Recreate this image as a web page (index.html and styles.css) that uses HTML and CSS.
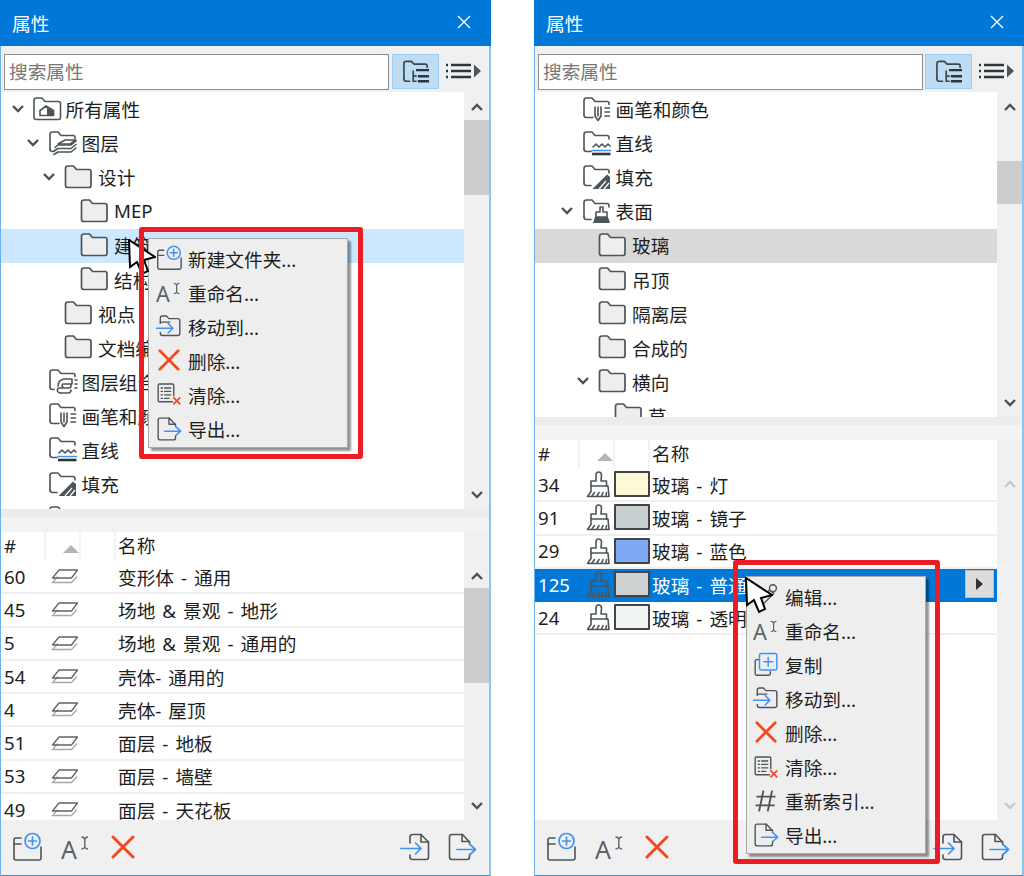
FILE: index.html
```html
<!DOCTYPE html>
<html lang="zh-CN">
<head>
<meta charset="utf-8">
<title>属性</title>
<link rel="stylesheet" href="styles.css">
</head>
<body>
<svg class="defs" aria-hidden="true">
  <symbol id="folder" viewBox="0 0 28 24"><path class="fl" d="M1.500 3.500Q1.500 1 4 1H9.500L12.500 4.500H25Q27 4.500 27 6.500V20.500Q27 22.500 25 22.500H4Q1.500 22.500 1.500 20.500Z"/></symbol>
  <symbol id="f-all" viewBox="0 0 30 26"><path class="st" d="M2 4.500Q2 2 4.500 2H10L13 5.500H26.500Q28.500 5.500 28.500 7.500V21.500Q28.500 23.500 26.500 23.500H4.500Q2 23.500 2 21.500Z"/><path class="st" d="M8 19.500V14.500L14 10L21.500 14.500V19.500H8"/><path class="dk" d="M15 11.500L21.500 15V19.500H15Z"/></symbol>
  <symbol id="f-layer" viewBox="0 0 30 26"><path class="st" d="M2 19V4.500Q2 2 4.500 2H10L13 5.500H25Q27 5.500 27 7.500V8.500"/><path class="st" d="M2 19Q2 21.500 4.500 21.500H6"/><path class="st" d="M10 14L17 10H28L22 14Z"/><path class="st" d="M7 17.500L10 15H23L28 11M6 21L10 18.500H23L28 14.500M6 24.500L10 22H23L28 18"/></symbol>
  <symbol id="f-combo" viewBox="0 0 30 26"><path class="st" d="M2 19V4.500Q2 2 4.500 2H10L13 5.500H25Q27 5.500 27 7.500V8.500"/><path class="st" d="M2 19Q2 21.500 4.500 21.500H6"/><path class="st" d="M10 18Q10 12 16 11H24M12 25Q8 24 10 20H20Q24 20 23 16H15Q13 18 15 19M24 11V16M27 12H29M27 16H29M27 20H29"/><path class="st" d="M12 25H20Q23 25 23 22"/></symbol>
  <symbol id="f-pen" viewBox="0 0 30 26"><path class="st" d="M2 19V4.500Q2 2 4.500 2H10L13 5.500H25Q27 5.500 27 7.500V8.500"/><path class="st" d="M2 19Q2 21.500 4.500 21.500H11"/><path class="st" d="M13 11V20L16 24.500L19 20V11"/><path class="st" d="M16 11V20M23 12H27.500M23 16H27.500M23 20H27.500"/></symbol>
  <symbol id="f-line" viewBox="0 0 30 26"><path class="st" d="M2 19V4.500Q2 2 4.500 2H10L13 5.500H25Q27 5.500 27 7.500V9"/><path class="st" d="M2 19Q2 21.500 4.500 21.500H9"/><path class="st" d="M11 17L14 14L17 17L20 14L23 17L26 14L28 16"/><path class="bl" d="M10 20.500H28.500"/><path class="st-w" d="M10 24H28.500"/></symbol>
  <symbol id="f-fill" viewBox="0 0 30 26"><path class="st" d="M2 19V4.500Q2 2 4.500 2H10L13 5.500H25Q27 5.500 27 7.500V9"/><path class="st" d="M2 19Q2 21.500 4.500 21.500H9"/><path class="dk" d="M10.500 25L25 10.500L28 13V25Z"/><path class="wl" d="M17 25L24 17M22 25L27 19"/></symbol>
  <symbol id="f-surf" viewBox="0 0 30 26"><path class="st" d="M2 19V4.500Q2 2 4.500 2H10L13 5.500H25Q27 5.500 27 7.500V9"/><path class="st" d="M2 19Q2 21.500 4.500 21.500H9"/><path class="st" d="M18 9H21V14H25V19H14V14H18Z"/><path class="dk" d="M13 19H26L28 25H11Z"/></symbol>
  <symbol id="slab" viewBox="0 0 28 16"><path class="st-l" d="M7 8.500L1.500 14.500H20.500L26 8.500"/><path class="st-s" d="M8 2H26.500L20.500 10H1.500Z"/></symbol>
  <symbol id="brush" viewBox="0 0 24 28"><path class="st" d="M12.500 2Q15.500 2 15.500 5L15 11H20.500V16H22L23 26.500H1.500L5 21.500V11H10L10 5Q10 2 12.500 2Z"/><path class="st" d="M5 16H21M6 26L8.500 22.500M11 26L13 22.500M15.500 26L17 22.500M20 26L20.500 22.500"/></symbol>
  <symbol id="new-folder" viewBox="0 0 30 30"><path class="st" d="M9 6H4Q2 6 2 8V26Q2 28 4 28H27Q29 28 29 26V15"/><path class="st" d="M2 12H9"/><circle class="bl" cx="20.500" cy="9" r="7.500"/><path class="bl" d="M20.500 5V13M16.500 9H24.500"/></symbol>
  <symbol id="rename" viewBox="0 0 30 30"><text class="ic-a" x="0" y="27">A</text><path class="st-t" d="M20.500 5Q23 5 23.800 7Q24.600 5 27 5M20.500 17Q23 17 23.800 15Q24.600 17 27 17M23.800 7V15"/></symbol>
  <symbol id="move" viewBox="0 0 30 30"><path class="st" d="M5 12V6Q5 3.500 7.500 3.500H12L15 6.500H25Q27.500 6.500 27.500 9V24Q27.500 26 25 26H7.500Q5 26 5 24V22.500"/><path class="st" d="M5 10.500H16"/><path class="bl" d="M0 17.500H19M14 12L19.500 17.500L14 23"/></symbol>
  <symbol id="del" viewBox="0 0 24 24"><path class="rd" d="M2 2L22 22M22 2L2 22"/></symbol>
  <symbol id="clean" viewBox="0 0 30 30"><path class="st" d="M19 24H4Q2.500 24 2.500 22.500V5Q2.500 3.500 4 3.500H19Q20.500 3.500 20.500 5V17"/><path class="st" d="M6 8H7.500M6 12H7.500M6 16H7.500M6 20H7.500M10 8H17M10 12H17M10 16H17M10 20H15"/><path class="rd-s" d="M20 19L28 27M28 19L20 27"/></symbol>
  <symbol id="export" viewBox="0 0 30 30"><path class="st" d="M22.500 12V10L15.500 2.500H5Q2.500 2.500 2.500 5V25Q2.500 27.500 5 27.500H20Q22.500 27.500 22.500 25V22.500"/><path class="st" d="M15 2.500V9.500H22.500"/><path class="bl" d="M10 17.500H28M23 12.500L28.500 17.500L23 22.500"/></symbol>
  <symbol id="import" viewBox="0 0 30 30"><path class="st" d="M10 11V5Q10 2.500 12.500 2.500H21L28.500 10V25Q28.500 27.500 26 27.500H12.500Q10 27.500 10 25V23"/><path class="st" d="M21 2.500V10H28.500"/><path class="bl" d="M1 16.500H21M15.500 11L21 16.500L15.500 22"/></symbol>
  <symbol id="edit" viewBox="0 0 30 30"><path class="st" d="M5 23L19 8L24 12L10 26L4 28Z"/><circle class="st" cx="23" cy="6" r="4"/></symbol>
  <symbol id="copy" viewBox="0 0 30 30"><path class="st" d="M6 10H4Q2.500 10 2.500 12V26Q2.500 28 4 28H18Q20 28 20 26V24"/><rect class="bl" x="7.500" y="3" width="20" height="19" rx="2"/><path class="bl" d="M17.500 7.500V17.500M12.500 12.500H22.500"/></symbol>
  <symbol id="hash" viewBox="0 0 30 30"><path class="st-h" d="M12 3L7 27M22 3L17 27M4 10H26M3 20H25"/></symbol>
  <symbol id="tree-view" viewBox="0 0 30 28"><path class="st-m" d="M2 21V5Q2 2.500 4.500 2.500H10L13 5.500H25Q27 5.500 27 7.500V9"/><path class="st-m" d="M2 21Q2 24 4.500 24H8"/><path class="st-m" d="M12 13V24H15M12 18.500H15"/><path class="st-w" d="M15 12H29M17 18.500H29M17 24H29"/></symbol>
  <symbol id="list-menu" viewBox="0 0 38 20"><path class="st-w" d="M2 4H4M7 4H27M2 10H4M7 10H27M2 16H4M7 16H27"/><path class="dk" d="M30 3.500L37 10L30 16.500Z"/></symbol>
  <symbol id="close" viewBox="0 0 16 16"><path class="wh" d="M2 2L14 14M14 2L2 14"/></symbol>
  <symbol id="chev-d" viewBox="0 0 14 10"><path class="ch" d="M2 2L7 7L12 2"/></symbol>
  <symbol id="chev-u" viewBox="0 0 14 10"><path class="ch" d="M2 8L7 3L12 8"/></symbol>
  <symbol id="chev-d-l" viewBox="0 0 14 10"><path class="ch-l" d="M2 2L7 7L12 2"/></symbol>
  <symbol id="chev-u-l" viewBox="0 0 14 10"><path class="ch-l" d="M2 8L7 3L12 8"/></symbol>
  <symbol id="cursor" viewBox="0 0 28 38"><path class="cur" d="M1 1L2 28L9 23L14 35L20 32L16 21L27 18Z"/></symbol>
</svg>

<main class="desktop">
  <section class="panel panel-left">
    <header class="title"><span>属性</span><svg class="i-close"><use href="#close"/></svg></header>
    <div class="toolbar">
      <div class="search">搜索属性</div>
      <div class="tool-btn"><svg class="i-tree"><use href="#tree-view"/></svg></div>
      <svg class="i-list"><use href="#list-menu"/></svg>
    </div>
    <div class="tree-area tree-left">
      <div class="tree">
        <div class="row l0"><span class="chev"><svg class="i-chev"><use href="#chev-d"/></svg></span><svg class="i-w"><use href="#f-all"/></svg><span>所有属性</span></div>
        <div class="row l1"><span class="chev"><svg class="i-chev"><use href="#chev-d"/></svg></span><svg class="i-w"><use href="#f-layer"/></svg><span>图层</span></div>
        <div class="row l2"><span class="chev"><svg class="i-chev"><use href="#chev-d"/></svg></span><svg class="i-f"><use href="#folder"/></svg><span>设计</span></div>
        <div class="row l3"><span class="chev"></span><svg class="i-f"><use href="#folder"/></svg><span>MEP</span></div>
        <div class="row l3 sel-blue"><span class="chev"></span><svg class="i-f"><use href="#folder"/></svg><span>建筑</span></div>
        <div class="row l3"><span class="chev"></span><svg class="i-f"><use href="#folder"/></svg><span>结构</span></div>
        <div class="row l2"><span class="chev"></span><svg class="i-f"><use href="#folder"/></svg><span>视点</span></div>
        <div class="row l2"><span class="chev"></span><svg class="i-f"><use href="#folder"/></svg><span>文档编制</span></div>
        <div class="row l1"><span class="chev"></span><svg class="i-w"><use href="#f-combo"/></svg><span>图层组合</span></div>
        <div class="row l1"><span class="chev"></span><svg class="i-w"><use href="#f-pen"/></svg><span>画笔和颜色</span></div>
        <div class="row l1"><span class="chev"></span><svg class="i-w"><use href="#f-line"/></svg><span>直线</span></div>
        <div class="row l1"><span class="chev"></span><svg class="i-w"><use href="#f-fill"/></svg><span>填充</span></div>
        <div class="row l1"><span class="chev"></span><svg class="i-w"><use href="#f-surf"/></svg><span>表面</span></div>
      </div>
      <div class="sbar">
        <svg class="i-sb"><use href="#chev-u"/></svg>
        <div class="sb-track"><div class="thumb thumb-a"></div></div>
        <svg class="i-sb"><use href="#chev-d"/></svg>
      </div>
    </div>
    <div class="splitter"></div>
    <div class="table-area">
      <div class="table">
        <div class="thead"><span class="th">#</span><span class="th th-sort"><i class="tri"></i></span><span class="th"></span><span class="th th-name">名称</span></div>
        <div class="tr"><span class="num">60</span><span class="kind"><svg class="i-slab"><use href="#slab"/></svg></span><span>变形体 - 通用</span></div>
        <div class="tr"><span class="num">45</span><span class="kind"><svg class="i-slab"><use href="#slab"/></svg></span><span>场地 &amp; 景观 - 地形</span></div>
        <div class="tr"><span class="num">5</span><span class="kind"><svg class="i-slab"><use href="#slab"/></svg></span><span>场地 &amp; 景观 - 通用的</span></div>
        <div class="tr"><span class="num">54</span><span class="kind"><svg class="i-slab"><use href="#slab"/></svg></span><span>壳体- 通用的</span></div>
        <div class="tr"><span class="num">4</span><span class="kind"><svg class="i-slab"><use href="#slab"/></svg></span><span>壳体- 屋顶</span></div>
        <div class="tr"><span class="num">51</span><span class="kind"><svg class="i-slab"><use href="#slab"/></svg></span><span>面层 - 地板</span></div>
        <div class="tr"><span class="num">53</span><span class="kind"><svg class="i-slab"><use href="#slab"/></svg></span><span>面层 - 墙壁</span></div>
        <div class="tr"><span class="num">49</span><span class="kind"><svg class="i-slab"><use href="#slab"/></svg></span><span>面层 - 天花板</span></div>
      </div>
      <div class="sbar sbar-t">
        <svg class="i-sb"><use href="#chev-u"/></svg>
        <div class="sb-track"><div class="thumb thumb-b"></div></div>
        <svg class="i-sb"><use href="#chev-d"/></svg>
      </div>
    </div>
    <footer class="footer">
      <svg class="i-foot"><use href="#new-folder"/></svg>
      <svg class="i-foot"><use href="#rename"/></svg>
      <svg class="i-foot i-foot-x"><use href="#del"/></svg>
      <span class="grow"></span>
      <svg class="i-foot i-foot-in"><use href="#import"/></svg>
      <svg class="i-foot"><use href="#export"/></svg>
    </footer>

    <div class="menu menu-left">
      <div class="mi"><svg class="i-m"><use href="#new-folder"/></svg><span>新建文件夹...</span></div>
      <div class="mi"><svg class="i-m"><use href="#rename"/></svg><span>重命名...</span></div>
      <div class="mi"><svg class="i-m"><use href="#move"/></svg><span>移动到...</span></div>
      <div class="mi"><svg class="i-m i-m-x"><use href="#del"/></svg><span>删除...</span></div>
      <div class="mi"><svg class="i-m"><use href="#clean"/></svg><span>清除...</span></div>
      <div class="mi"><svg class="i-m"><use href="#export"/></svg><span>导出...</span></div>
    </div>
    <svg class="cursor cursor-left"><use href="#cursor"/></svg>
    <div class="mark mark-left"></div>
  </section>

  <section class="panel panel-right">
    <header class="title"><span>属性</span><svg class="i-close"><use href="#close"/></svg></header>
    <div class="toolbar">
      <div class="search">搜索属性</div>
      <div class="tool-btn"><svg class="i-tree"><use href="#tree-view"/></svg></div>
      <svg class="i-list"><use href="#list-menu"/></svg>
    </div>
    <div class="tree-area tree-right">
      <div class="tree">
        <div class="row l1"><span class="chev"></span><svg class="i-w"><use href="#f-pen"/></svg><span>画笔和颜色</span></div>
        <div class="row l1"><span class="chev"></span><svg class="i-w"><use href="#f-line"/></svg><span>直线</span></div>
        <div class="row l1"><span class="chev"></span><svg class="i-w"><use href="#f-fill"/></svg><span>填充</span></div>
        <div class="row l1"><span class="chev"><svg class="i-chev"><use href="#chev-d"/></svg></span><svg class="i-w"><use href="#f-surf"/></svg><span>表面</span></div>
        <div class="row l2 sel-gray"><span class="chev"></span><svg class="i-f"><use href="#folder"/></svg><span>玻璃</span></div>
        <div class="row l2"><span class="chev"></span><svg class="i-f"><use href="#folder"/></svg><span>吊顶</span></div>
        <div class="row l2"><span class="chev"></span><svg class="i-f"><use href="#folder"/></svg><span>隔离层</span></div>
        <div class="row l2"><span class="chev"></span><svg class="i-f"><use href="#folder"/></svg><span>合成的</span></div>
        <div class="row l2"><span class="chev"><svg class="i-chev"><use href="#chev-d"/></svg></span><svg class="i-f"><use href="#folder"/></svg><span>横向</span></div>
        <div class="row l3"><span class="chev"></span><svg class="i-f"><use href="#folder"/></svg><span>草</span></div>
      </div>
      <div class="sbar">
        <svg class="i-sb"><use href="#chev-u"/></svg>
        <div class="sb-track"><div class="thumb thumb-c"></div></div>
        <svg class="i-sb"><use href="#chev-d"/></svg>
      </div>
    </div>
    <div class="splitter"></div>
    <div class="table-area">
      <div class="table">
        <div class="thead"><span class="th">#</span><span class="th th-sort"><i class="tri"></i></span><span class="th"></span><span class="th th-name">名称</span></div>
        <div class="tr"><span class="num">34</span><span class="kind kind-b"><svg class="i-brush"><use href="#brush"/></svg><i class="swatch sw-a"></i></span><span>玻璃 - 灯</span></div>
        <div class="tr"><span class="num">91</span><span class="kind kind-b"><svg class="i-brush"><use href="#brush"/></svg><i class="swatch sw-b"></i></span><span>玻璃 - 镜子</span></div>
        <div class="tr"><span class="num">29</span><span class="kind kind-b"><svg class="i-brush"><use href="#brush"/></svg><i class="swatch sw-c"></i></span><span>玻璃 - 蓝色</span></div>
        <div class="tr tr-sel"><span class="num">125</span><span class="kind kind-b"><svg class="i-brush"><use href="#brush"/></svg><i class="swatch sw-d"></i></span><span>玻璃 - 普通玻璃</span><span class="row-btn"><i class="row-tri"></i></span></div>
        <div class="tr"><span class="num">24</span><span class="kind kind-b"><svg class="i-brush"><use href="#brush"/></svg><i class="swatch sw-e"></i></span><span>玻璃 - 透明</span></div>
      </div>
      <div class="sbar sbar-t">
        <svg class="i-sb"><use href="#chev-u-l"/></svg>
        <div class="sb-track"></div>
        <svg class="i-sb"><use href="#chev-d-l"/></svg>
      </div>
    </div>
    <footer class="footer">
      <svg class="i-foot"><use href="#new-folder"/></svg>
      <svg class="i-foot"><use href="#rename"/></svg>
      <svg class="i-foot i-foot-x"><use href="#del"/></svg>
      <span class="grow"></span>
      <svg class="i-foot i-foot-in"><use href="#import"/></svg>
      <svg class="i-foot"><use href="#export"/></svg>
    </footer>

    <div class="menu menu-right">
      <div class="mi"><svg class="i-m"><use href="#edit"/></svg><span>编辑...</span></div>
      <div class="mi"><svg class="i-m"><use href="#rename"/></svg><span>重命名...</span></div>
      <div class="mi"><svg class="i-m"><use href="#copy"/></svg><span>复制</span></div>
      <div class="mi"><svg class="i-m"><use href="#move"/></svg><span>移动到...</span></div>
      <div class="mi"><svg class="i-m i-m-x"><use href="#del"/></svg><span>删除...</span></div>
      <div class="mi"><svg class="i-m"><use href="#clean"/></svg><span>清除...</span></div>
      <div class="mi"><svg class="i-m"><use href="#hash"/></svg><span>重新索引...</span></div>
      <div class="mi"><svg class="i-m"><use href="#export"/></svg><span>导出...</span></div>
    </div>
    <svg class="cursor cursor-right"><use href="#cursor"/></svg>
    <div class="mark mark-right"></div>
  </section>
</main>
</body>
</html>
```

FILE: styles.css
```css
* { box-sizing: border-box; }
html, body { margin: 0; padding: 0; background: #fff; }
body {
  width: 1024px;
  height: 876px;
  overflow: hidden;
  font-family: "Noto Sans", "Noto Sans CJK SC", sans-serif;
  font-size: 18.67px;
  color: #1e1e1e;
}
.defs { position: absolute; width: 0; height: 0; }
.desktop { display: flex; gap: 43px; height: 876px; }

.panel {
  position: relative;
  display: flex;
  flex-direction: column;
  height: 876px;
  background: #f0f0f0;
  border-left: 1px solid #6db2ec;
  border-right: 2px solid #8cc4f0;
  border-bottom: 1px solid #3f8ccc;
}
.panel-left { width: 491px; }
.panel-right { width: 490px; }

.title {
  flex: none;
  height: 46px;
  margin-left: -1px;
  margin-right: -2px;
  padding: 0 19px 2px 12px;
  background: #0078d7;
  color: #fff;
  display: flex;
  align-items: center;
  justify-content: space-between;
  font-size: 18.67px;
}
.i-close { width: 16px; height: 16px; }

.toolbar {
  flex: none;
  height: 46px;
  display: flex;
  align-items: flex-start;
  padding: 8px 0 0 3px;
}
.search {
  width: 385px;
  height: 36px;
  background: #fff;
  border: 1px solid #8e8e8e;
  padding-left: 4px;
  line-height: 33px;
  color: #777;
}
.tool-btn {
  width: 47px;
  height: 35px;
  margin-left: 3px;
  background: #bfdcf5;
  border: 1px solid #9bcdf6;
  display: flex;
  align-items: center;
  justify-content: center;
}
.panel-right .tool-btn { margin-left: 2px; }
.i-tree { width: 28px; height: 26px; }
.i-list { width: 38px; height: 20px; margin: 7px 0 0 5px; }

.tree-area { flex: none; display: flex; overflow: hidden; }
.tree-left { height: 417px; }
.tree-right { height: 325px; }
.tree { flex: 1; min-width: 0; background: #fff; padding-top: 0.5px; overflow: hidden; }
.row { height: 34.1px; padding-bottom: 2px; display: flex; align-items: center; white-space: nowrap; }
.l0 { padding-left: 6.5px; }
.l1 { padding-left: 22.5px; }
.l2 { padding-left: 39px; }
.l3 { padding-left: 55px; }
.sel-blue { background: #cce8ff; }
.sel-gray { background: #d9d9d9; }
.chev { width: 24px; flex: none; display: flex; align-items: center; padding-left: 2px; }
.l0 .chev { padding-left: 3px; }
.i-chev { width: 14px; height: 10px; }
.i-f { width: 28px; height: 24px; margin-right: 6px; flex: none; }
.i-w { width: 30px; height: 26px; margin-right: 4px; flex: none; }

.sbar {
  flex: none;
  width: 25px;
  background: #f0f0f0;
  display: flex;
  flex-direction: column;
  align-items: stretch;
}
.sbar-t { padding-top: 29px; }
.i-sb { width: 14px; height: 10px; margin: 10px auto 9px; flex: none; }
.sb-track { flex: 1; position: relative; }
.thumb { position: absolute; left: 0; right: 0; background: #cdcdcd; }
.thumb-a { top: -1px; height: 75px; }
.thumb-b { top: -2px; height: 95px; }
.thumb-c { top: 40px; height: 43px; }

.splitter {
  flex: none;
  height: 23px;
  background: #f3f3f3;
  border-top: 8px solid #ececec;
}

.table-area { flex: 1; min-height: 0; display: flex; overflow: hidden; }
.table { flex: 1; min-width: 0; background: #fff; overflow: hidden; }
.thead {
  height: 29px;
  display: grid;
  grid-template-columns: 45px 35px 35px 1fr;
  align-items: stretch;
}
.th { line-height: 28px; padding-left: 3px; border-right: 2px solid #f3f3f3; position: relative; }
.th-name { border-right: 0; padding-left: 2px; }
.th-sort { padding: 0; }
.tri {
  position: absolute;
  left: 17px;
  top: 13px;
  width: 0;
  height: 0;
  border-left: 8px solid transparent;
  border-right: 8px solid transparent;
  border-bottom: 8px solid #b4b4b4;
}
.tr {
  height: 33.3px;
  padding-bottom: 1px;
  display: grid;
  grid-template-columns: 45px 72px 1fr auto;
  align-items: center;
  border-bottom: 2px solid #f0f0f0;
  white-space: nowrap;
  overflow: hidden;
  word-spacing: 2.2px;
}
.num { padding-left: 3px; }
.kind { display: flex; align-items: center; padding-left: 5px; }
.kind-b { padding-left: 6px; }
.i-slab { width: 28px; height: 16px; }
.i-brush { width: 24px; height: 28px; flex: none; }
.swatch {
  width: 36px;
  height: 26px;
  margin-left: 4px;
  flex: none;
  border: 2px solid #444;
  border-radius: 1px;
  display: block;
}
.sw-a { background: #fefad6; }
.sw-b { background: #c6ced0; }
.sw-c { background: #7fa9f7; }
.sw-d { background: #cdd1d2; }
.sw-e { background: #eff5f0; }
.tr-sel { background: #0078d7; color: #fff; border-bottom-color: #0078d7; }
.row-btn {
  width: 29px;
  height: 28px;
  margin-right: 3px;
  background: #dcdcdc;
  border: 1px solid #bcbcbc;
  display: flex;
  align-items: center;
  justify-content: center;
}
.row-tri {
  width: 0;
  height: 0;
  border-top: 6px solid transparent;
  border-bottom: 6px solid transparent;
  border-left: 7px solid #333;
}

.footer {
  flex: none;
  height: 55px;
  display: flex;
  align-items: center;
  gap: 19px;
  padding: 0 12px 2px 11px;
}
.grow { flex: 1; }
.i-foot { width: 30px; height: 30px; flex: none; }
.i-foot-x { width: 24px; height: 24px; margin-left: 1px; }
.i-foot-in { margin-right: -2px; }

.menu {
  position: absolute;
  background: #eeeeee;
  border: 1px solid #a9a9a9;
  box-shadow: 3px 3px 2px rgba(0, 0, 0, .42);
  padding: 2px 0;
  display: flex;
  flex-direction: column;
}
.menu-left { left: 147px; top: 238px; width: 200px; height: 210px; }
.menu-right { left: 211px; top: 576px; width: 180px; height: 278px; }
.mi { height: 34.1px; display: flex; align-items: center; white-space: nowrap; padding-left: 6px; flex: none; }
.menu-left .mi { padding-left: 7px; }
.i-m { width: 26px; height: 26px; margin-right: 6px; flex: none; }
.i-m-x { padding: 2px; }

.cursor { position: absolute; width: 28px; height: 38px; }
.cursor-left { left: 127px; top: 239px; }
.cursor-right { left: 210px; top: 577px; }
.mark {
  position: absolute;
  border: 5px solid #ed1c24;
  border-radius: 3px;
}
.mark-left { left: 138px; top: 227px; width: 224px; height: 232px; }
.mark-right { left: 198px; top: 560px; width: 207px; height: 304px; }

/* icon strokes */
.st, .st-s, .st-l, .st-t, .st-m, .st-w, .st-h, .bl, .rd, .rd-s, .wh, .wl, .ch, .ch-l { fill: none; }
.st { stroke: #4c5559; stroke-width: 1.6; stroke-linecap: round; stroke-linejoin: round; }
.st-s { stroke: #5c6468; stroke-width: 1.3; stroke-linejoin: round; }
.fl { fill: #eeeeee; stroke: #4c5559; stroke-width: 1.7; stroke-linejoin: round; }
.dk { fill: #4c5559; }
.st-l { stroke: #a4a8aa; stroke-width: 1.3; }
.st-t { stroke: #5a6367; stroke-width: 1.4; }
.st-m { stroke: #3e4649; stroke-width: 1.8; stroke-linecap: round; }
.st-w { stroke: #2f3639; stroke-width: 2.6; }
.st-h { stroke: #4c5559; stroke-width: 2.2; }
.wl { stroke: #fff; stroke-width: 1.2; }
.bl { stroke: #3f93f5; stroke-width: 1.7; stroke-linecap: round; stroke-linejoin: round; }
.rd { stroke: #f4491f; stroke-width: 3; stroke-linecap: round; }
.rd-s { stroke: #f4491f; stroke-width: 2; }
.wh { stroke: #fff; stroke-width: 1.4; }
.ch { stroke: #505050; stroke-width: 2.4; stroke-linejoin: miter; }
.ch-l { stroke: #c8c8c8; stroke-width: 2.4; }
.cur { fill: #fff; stroke: #000; stroke-width: 2; stroke-linejoin: miter; }
.ic-a { font-family: "Noto Sans", sans-serif; font-size: 25px; fill: #5a6367; }
```
